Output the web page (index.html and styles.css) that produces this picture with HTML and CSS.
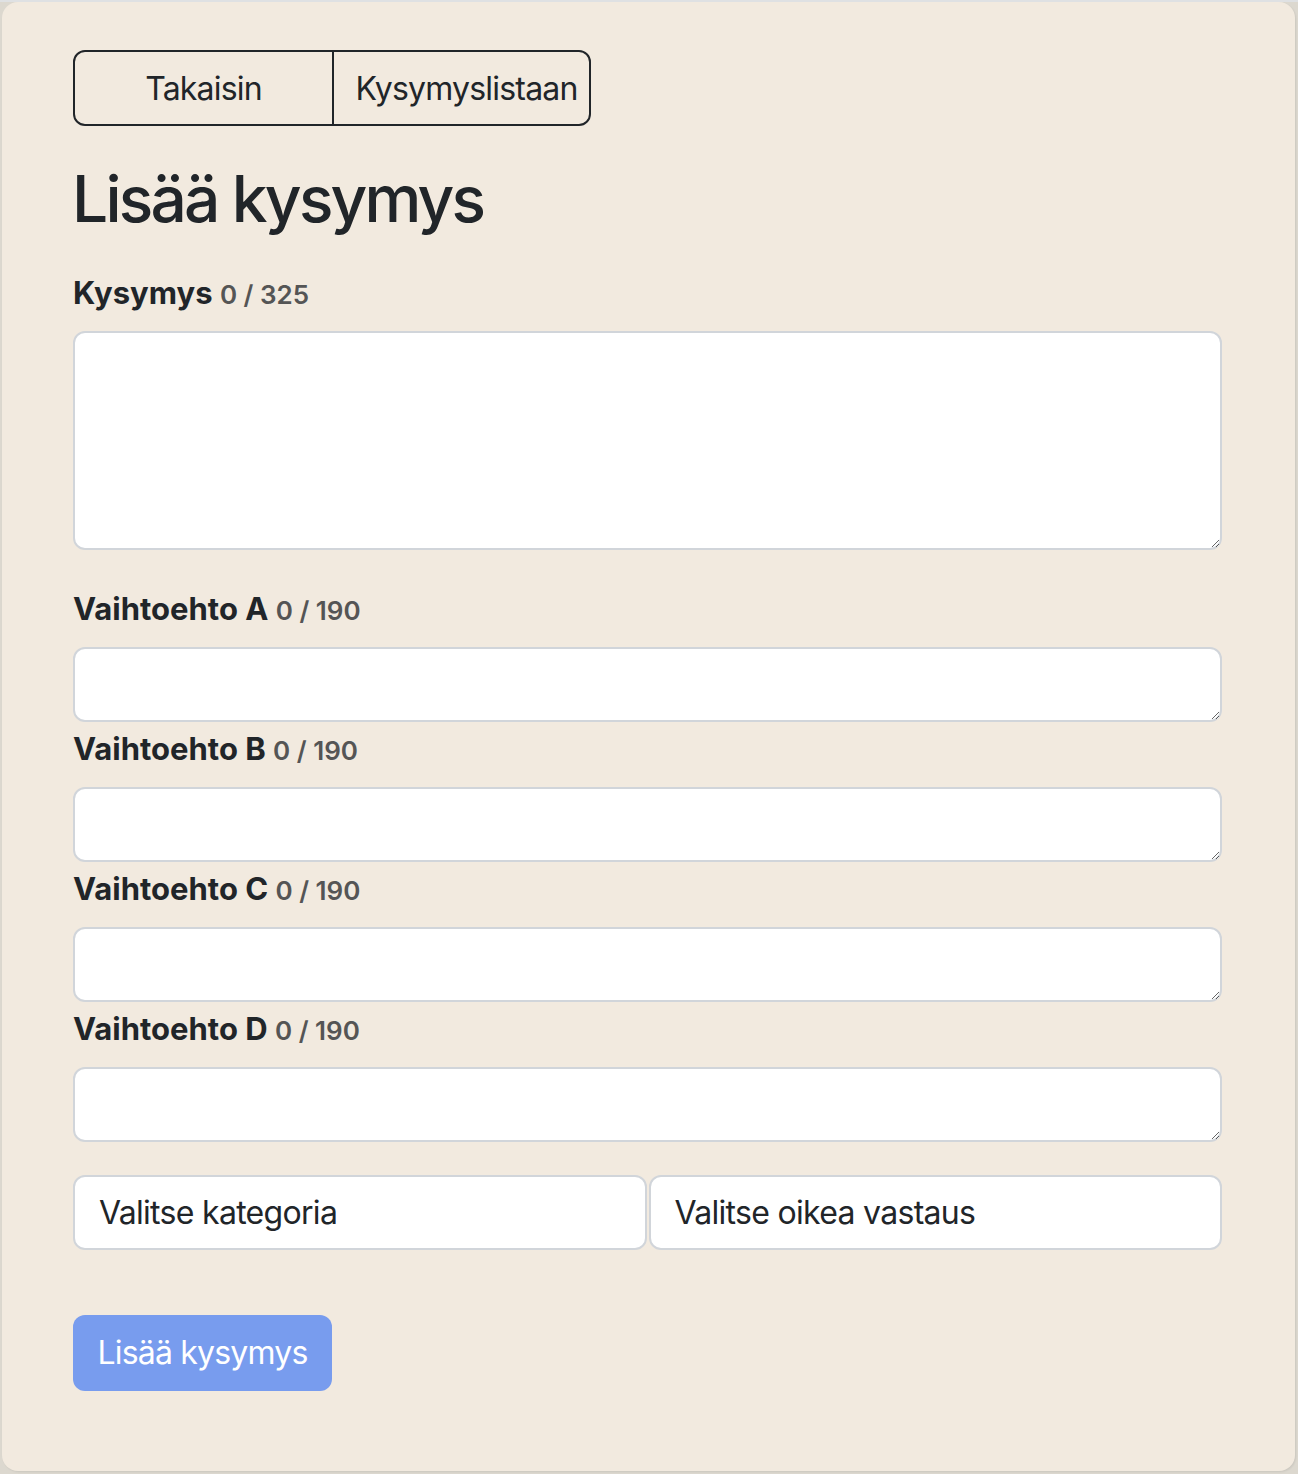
FILE: index.html
```html
<!DOCTYPE html>
<html lang="fi">
<head>
<meta charset="utf-8">
<title>Lisää kysymys</title>
<link rel="stylesheet" href="styles.css">
</head>
<body>
<main class="card">
  <div class="btn-group">
    <button class="btn-outline">Takaisin</button>
    <button class="btn-outline btn-list">Kysymyslistaan</button>
  </div>
  <h1 class="title">Lisää kysymys</h1>
  <form class="form">
    <label class="label label-first">Kysymys <span class="count">0 / 325</span></label>
    <textarea class="area area-big"></textarea>
    <label class="label label-gap">Vaihtoehto A <span class="count">0 / 190</span></label>
    <textarea class="area"></textarea>
    <label class="label">Vaihtoehto B <span class="count">0 / 190</span></label>
    <textarea class="area"></textarea>
    <label class="label">Vaihtoehto C <span class="count">0 / 190</span></label>
    <textarea class="area"></textarea>
    <label class="label">Vaihtoehto D <span class="count">0 / 190</span></label>
    <textarea class="area"></textarea>
    <div class="selects">
      <div class="select">Valitse kategoria</div>
      <div class="select">Valitse oikea vastaus</div>
    </div>
    <button type="button" class="btn-primary" disabled>Lisää kysymys</button>
  </form>
</main>
</body>
</html>
```

FILE: styles.css
```css
html, body {
  margin: 0;
  padding: 0;
}
body {
  background: #dcd8cf;
  border-top: 2px solid #dfe1e3;
  font-family: Inter, "Noto Sans", sans-serif;
  color: #212529;
  min-height: 1472px;
}
.card {
  margin: 0 3px 3px 2px;
  background: #f2eadf;
  border-radius: 16px;
  padding: 48px 73px 80px 71px;
  box-shadow: 1px 1px 2px rgba(0,0,0,0.08);
  display: flex;
  flex-direction: column;
  align-items: flex-start;
}
.btn-group {
  display: flex;
  border: 2px solid #212529;
  border-radius: 12px;
  overflow: hidden;
}
.btn-outline {
  width: 257px;
  height: 72px;
  background: transparent;
  border: 0;
  font-family: inherit;
  font-size: 32px;
  letter-spacing: -0.8px;
  color: #212529;
  padding: 0;
}
.btn-outline + .btn-outline {
  border-left: 2px solid #212529;
}
.btn-list {
  padding-left: 10px;
}
.title {
  font-size: 64px;
  font-weight: 500;
  line-height: 1.2;
  margin: 35px 0 0 -1px;
  letter-spacing: -2.8px;
}
.form {
  display: flex;
  flex-direction: column;
  align-self: stretch;
}
.label {
  font-size: 31px;
  font-weight: 700;
  line-height: 45px;
  height: 45px;
  margin-top: 4px;
  margin-bottom: 16px;
}
.label-first {
  margin-top: 32px;
}
.label-gap {
  margin-top: 36px;
}
.count {
  font-size: 26px;
  font-weight: 600;
  line-height: 1;
  color: #555;
}
.area {
  display: block;
  box-sizing: border-box;
  width: 100%;
  height: 75px;
  border: 2px solid #d1d5da;
  border-radius: 12px;
  background: #fff;
  margin: 0;
  font-family: inherit;
  font-size: 32px;
  resize: vertical;
}
.area-big {
  height: 219px;
}
.selects {
  display: flex;
  gap: 2px;
  margin-top: 33px;
}
.select {
  flex: 1;
  box-sizing: border-box;
  height: 75px;
  border: 2px solid #d1d5da;
  border-radius: 12px;
  background: #fff;
  padding: 0 24px;
  display: flex;
  align-items: center;
  font-size: 32px;
  letter-spacing: -0.7px;
}
.btn-primary {
  align-self: flex-start;
  margin-top: 65px;
  width: 259px;
  height: 76px;
  border: 0;
  border-radius: 12px;
  background: #789cee;
  color: #fff;
  font-family: inherit;
  font-size: 32px;
  letter-spacing: -0.8px;
  padding: 0;
}
```
